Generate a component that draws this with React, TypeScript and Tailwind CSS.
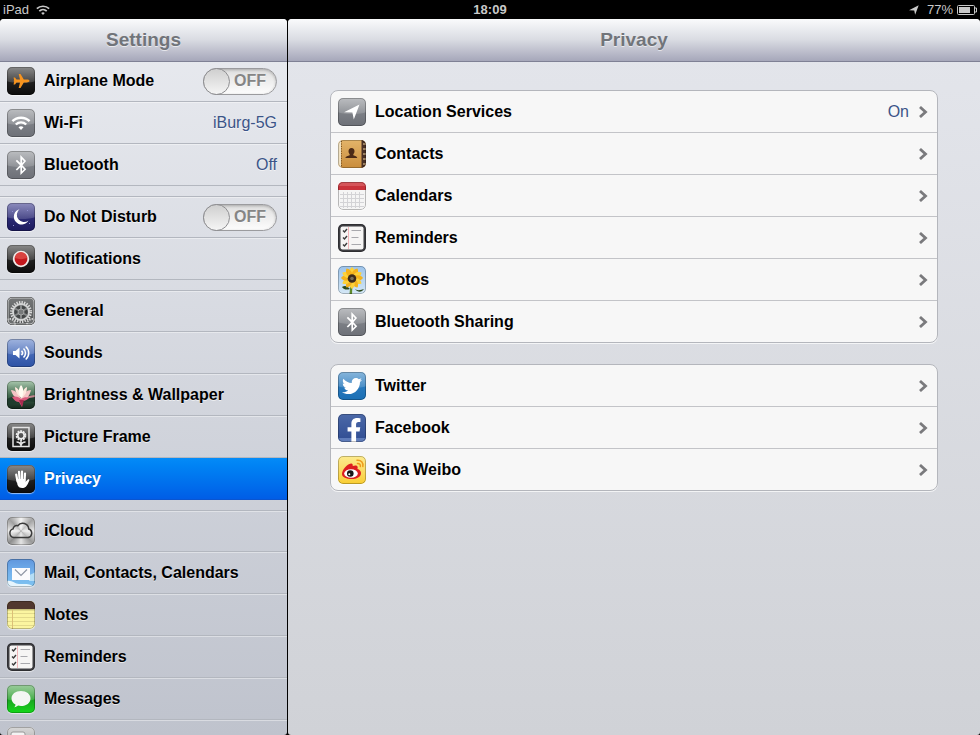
import type { ReactNode } from 'react';
import clsx from 'clsx';
import { FaBluetoothB, FaFacebookF, FaTwitter } from 'react-icons/fa';

type Row = {
  label: string;
  icon: ReactNode;
  value?: string;
  toggle?: boolean;
  active?: boolean;
};

const Tile = ({ className, children, gloss }: { className: string; children?: ReactNode; gloss?: boolean }) => (
  <span className={clsx('relative flex size-7 shrink-0 items-center justify-center overflow-hidden rounded-[5px] shadow-[0_1px_1px_rgba(255,255,255,0.6)]', className)}>
    {gloss && <span className="absolute -inset-x-2 top-0 h-4 rounded-b-[50%] bg-gradient-to-b from-white/40 to-white/15" />}
    <span className="relative flex items-center justify-center">{children}</span>
    <span className="absolute inset-0 rounded-[5px] border border-black/25" />
  </span>
);

const Art = ({ children }: { children: ReactNode }) => (
  <svg viewBox="0 0 28 28" className="size-7" fill="none" aria-hidden="true">
    {children}
  </svg>
);

const GREY = 'bg-gradient-to-b from-[#8e9196] to-[#6d7077] text-white';
const BLACK = 'bg-gradient-to-b from-[#3a3a3a] to-[#0c0c0c] text-white';

const WifiGlyph = ({ className }: { className?: string }) => (
  <svg viewBox="0 0 20 14" className={className} fill="none" stroke="currentColor" strokeWidth="2.4" aria-hidden="true">
    <path d="M1.400 5.200C6 .6 14 .6 18.600 5.200" />
    <path d="M4.800 8.500c2.900-2.800 7.500-2.800 10.400 0" />
    <path d="M7.500 11.200c1.500-1.300 3.500-1.300 5 0L10 14z" fill="currentColor" stroke="none" />
  </svg>
);

const ArrowGlyph = ({ className }: { className?: string }) => (
  <svg viewBox="0 0 16 16" className={className} fill="currentColor" aria-hidden="true">
    <path d="M15.500.5L9.800 15.500 8.400 8.600 0 8.200z" />
  </svg>
);

const AirplaneIcon = () => (
  <Tile className={BLACK} gloss>
    <Art>
      <path
        d="M22.500 14c0 .9-1.400 1.400-3 1.400h-2.700L13.500 21h-1.800l1.300-5.600H9.500L8 17.500H6.500l.7-2.700-.7-.8.700-.8-.7-2.700H8l1.500 2.100H13L11.700 7h1.800l3.300 5.600h2.700c1.600 0 3 .5 3 1.400z"
        fill="#f7941f"
      />
    </Art>
  </Tile>
);

const HandIcon = () => (
  <Tile className={BLACK} gloss>
    <Art>
      <path d="M9.200 9.500l1.300 7M12 6.800l.6 8M15 6.600v8M18 8.500l-.5 8" stroke="#fff" strokeWidth="2.200" strokeLinecap="round" />
      <path d="M9.500 14h9l-.2 3 2.300-2.300c.8-.7 2-.2 1.700.8-1 2.500-2.500 6.500-5.200 7.300-3 .8-6-.3-6.700-3.300z" fill="#fff" />
    </Art>
  </Tile>
);

const BluetoothIcon = () => (
  <Tile className={GREY} gloss>
    <FaBluetoothB className="size-5" />
  </Tile>
);

const RemindersIcon = () => (
  <Tile className="bg-[#3e3e42]">
    <Art>
      <rect x="2.500" y="2.500" width="23" height="23" rx="2" fill="#f6f5f4" />
      <path d="M10.500 3v22" stroke="#f0b5b8" />
      {[6.5, 13.5, 20.5].map((y, i) => (
        <g key={y}>
          <path d={`M5 ${y}l1.500 1.500 2.500-3`} stroke="#3c3c3c" strokeWidth="1.400" />
          <path d={`M13.500 ${y}h${i === 1 ? 7 : 9.5}`} stroke="#a9a9ad" strokeWidth="1.200" />
        </g>
      ))}
    </Art>
  </Tile>
);

const GearIcon = () => (
  <Tile className="bg-gradient-to-b from-[#77797a] to-[#505253]">
    <Art>
      <circle cx="14" cy="15" r="9.500" stroke="#dcdcdc" strokeWidth="3" strokeDasharray="1.300 1.200" />
      <circle cx="14" cy="15" r="8" stroke="#d2d3d3" strokeWidth="1.800" />
      <circle cx="14" cy="15" r="6.500" fill="#444647" />
      <path d="M14 8v14M8 11.500l12 7M20 11.500l-12 7" stroke="#858788" strokeWidth="2" />
      <circle cx="14" cy="15" r="3" fill="#77797a" stroke="#a5a6a6" />
      <circle cx="3" cy="27" r="5" stroke="#d0d0d0" strokeWidth="2" strokeDasharray="1.500 1" fill="#6d6f70" />
      <circle cx="25" cy="27" r="5" stroke="#d0d0d0" strokeWidth="2" strokeDasharray="1.500 1" fill="#6d6f70" />
      <rect x="1" y="1" width="26" height="26" rx="4" stroke="#c4c5c6" />
    </Art>
  </Tile>
);

const LotusIcon = () => (
  <Tile className="bg-gradient-to-b from-[#a9c8ae] via-[#456c51] to-[#14271d]">
    <Art>
      <path d="M0 18c6-4 22-5 28-2v5c-9-2-19 2-28 3z" fill="#203c2d" />
      <path d="M16 16l12-2v2l-11 2z" fill="#c4848e" />
      <path d="M4 9c5 0 7 4 10 8 2-5 6-8 10-8-1 5-4 9-9 11C9 18 5 14 4 9z" fill="#f3c3c4" />
      <path d="M8 6c4 2 6 6 6.500 11C10 14 8 10 8 6zM20 6c-4 2-5 6-5.500 11C19 14 20 10 20 6z" fill="#fde7dc" />
      <path d="M14 4c3 3 3 9 .5 13C11 13 11 8 14 4z" fill="#fffaf0" />
      <path d="M5 16c4-1 7 0 9 2 3-2 6-2 8-1-2 2-4 3-6 3l-1 6-3-5c-3 0-5-2-7-5z" fill="#d95b7c" />
      <path d="M12 19l3 7 2-7z" fill="#a92c50" />
    </Art>
  </Tile>
);

const PictureFrameIcon = () => (
  <Tile className={BLACK} gloss>
    <Art>
      <rect x="6" y="4.500" width="16" height="19" stroke="#e4e4e4" strokeWidth="1.500" />
      <circle cx="14" cy="12.500" r="4.300" stroke="#ececec" strokeWidth="2" strokeDasharray="1.900 .8" />
      <circle cx="14" cy="12.500" r="3.200" stroke="#ececec" strokeWidth="1.600" />
      <path d="M14 17v6M9.500 19c2 0 4 1 4.500 3.500.5-2.500 2.500-3.500 4.500-3.500" stroke="#e4e4e4" strokeWidth="1.500" />
    </Art>
  </Tile>
);

const SpeakerIcon = () => (
  <Tile className="bg-gradient-to-b from-[#5e80c8] to-[#2d52a5] text-white" gloss>
    <Art>
      <path d="M6 12h2.500l4-3.500v11l-4-3.500H6z" fill="#fff" />
      <path d="M14.500 11.800c1.300 1.300 1.300 3.100 0 4.400M16.500 9.500c2.700 2.600 2.700 6.400 0 9M18.700 7.500c4 3.600 4 9.400 0 13" stroke="#fff" strokeWidth="1.500" />
    </Art>
  </Tile>
);

const CloudIcon = () => (
  <Tile className="bg-[conic-gradient(#f5f5f5,#a5a5a5,#e9e9e9,#999,#e4e4e4,#8f8f8f,#ededed,#a0a0a0,#f5f5f5)]">
    <Art>
      <path
        d="M6.800 20.500a4.400 4.400 0 0 1-.7-8.600 3.600 3.600 0 0 1 4.700-3.100 6 6 0 0 1 10.900 3.200 4.400 4.400 0 0 1-.6 8.500z"
        fill="#fff"
        fillOpacity=".35"
        stroke="#3b3b3b"
        strokeWidth="1.500"
      />
    </Art>
  </Tile>
);

const MailIcon = () => (
  <Tile className="bg-gradient-to-b from-[#6096dd] via-[#73b2ed] to-[#7fc3f0]">
    <Art>
      <path d="M0 28v-6c5-1 8 3 12 3 5 0 10-1 16 3z" fill="#e6f5fd" />
      <path d="M22 17c2-3 5-2 6-4v9h-6z" fill="#b5def6" />
      <rect x="5" y="9" width="18" height="12" fill="#fbfbfd" />
      <path d="M8 10.500l6 6 6-6" stroke="#8f97a5" strokeWidth="1.200" />
    </Art>
  </Tile>
);

const NotesIcon = () => (
  <Tile className="bg-[#fbf5a0]">
    <Art>
      <path d="M0 0h28v8H0z" fill="#51382f" />
      <path d="M0 8h28v1.500H0z" fill="#c9c27a" />
      <path d="M0 12.500h28M0 16.500h28M0 20.500h28M0 24.500h28" stroke="#e3da8c" />
      <path d="M5.500 9v19" stroke="#dcc077" />
    </Art>
  </Tile>
);

const MessagesIcon = () => (
  <Tile className="bg-gradient-to-b from-[#55a957] via-[#1ba021] to-[#12d918]" gloss>
    <Art>
      <path
        d="M14 6c5.500 0 9.500 3.200 9.500 7.400S19.500 21 14 21c-1 0-2-.1-2.900-.4-.9.900-2.200 1.500-3.800 1.600.8-.8 1.200-1.700 1.200-2.800-2.500-1.300-4-3.400-4-6C4.500 9.200 8.500 6 14 6z"
        fill="#f4f6f4"
      />
    </Art>
  </Tile>
);

const FaceTimeIcon = () => (
  <Tile className="bg-gradient-to-b from-[#d8d8d8] to-[#9a9a9a]">
    <Art>
      <rect x="4" y="5" width="14" height="17" rx="2" fill="#f3f3f3" stroke="#989898" />
      <path d="M18 13l6-5v12l-6-5z" fill="#f3f3f3" stroke="#989898" />
    </Art>
  </Tile>
);

const MoonIcon = () => (
  <Tile className="bg-gradient-to-b from-[#3f3e90] to-[#1c1a5e]" gloss>
    <Art>
      <path d="M12.500 6.200a7.800 7.800 0 1 0 9 11.200 7 7 0 0 1-9-11.200z" fill="#fff" />
      <path d="M20 7h1v1h-1zM6 22h1v1H6zM22 20h1v1h-1zM5 8h1v1H5z" fill="#8f8fd0" />
    </Art>
  </Tile>
);

const NotificationsIcon = () => (
  <Tile className={BLACK} gloss>
    <Art>
      <circle cx="14" cy="14" r="7.300" fill="#c3181d" stroke="#f1e9e6" strokeWidth="1.800" />
      <path d="M8 13a6 6 0 0 1 12 0c-4 1.500-8 1.500-12 0z" fill="#d94340" />
    </Art>
  </Tile>
);

const ContactsIcon = () => (
  <Tile className="bg-gradient-to-b from-[#e3b469] to-[#c98d3c]">
    <Art>
      <path d="M0 0h3v28H0z" fill="#f1e2c2" />
      <path d="M3.500 1v26" stroke="#7c5423" strokeDasharray="1.200 1.200" />
      <path d="M23.500 0H28v28h-4.500z" fill="#4a3126" />
      <path d="M25 4h3M25 9h3M25 14h3M25 19h3M25 24h3" stroke="#b99d77" strokeWidth="1.500" />
      <path
        d="M13.500 8c2 0 3 1.400 3 3.300 0 1.200-.5 2.200-1.200 2.900v1c1.800.6 3.700 1 4 2.800h-12c.3-1.800 2.600-2.200 4.400-2.800v-1c-.7-.7-1.200-1.700-1.200-2.900C10.500 9.400 11.500 8 13.500 8z"
        fill="#4b2a17"
      />
    </Art>
  </Tile>
);

const CalendarIcon = () => (
  <Tile className="bg-[#f5f5f5]">
    <Art>
      <path d="M0 0h28v8H0z" fill="#c9333b" />
      <path d="M0 0h28v4H0z" fill="#d5555a" />
      <path d="M2 12.500h24M2 16.500h24M2 20.500h24M2 24.500h24M5.500 10v16M9.500 10v16M13.500 10v16M17.500 10v16M21.500 10v16" stroke="#d3d3d6" />
    </Art>
  </Tile>
);

const SunflowerIcon = () => (
  <Tile className="bg-gradient-to-b from-[#9cc3ea] to-[#d5e8f6]">
    <Art>
      <path d="M12.500 18l-1 10H14l.5-10z" fill="#5d8a2a" />
      <path d="M4 21c3-2 5-1 8 2-3 1-6 1-8-2zM17 23c3 2 6 1 9 0-2 3-6 4-9 0z" fill="#2c4a1c" />
      {[0, 30, 60, 90, 120, 150, 180, 210, 240, 270, 300, 330].map((angle) => (
        <path
          key={angle}
          d="M14 12C10 8 11 3 14 1c3 2 4 7 0 11z"
          fill={angle % 60 ? '#f4b21c' : '#fdd23a'}
          transform={`rotate(${angle} 14 12)`}
        />
      ))}
      <circle cx="14" cy="12.500" r="4.300" fill="#3b2a1a" />
      <circle cx="14" cy="12.500" r="1.800" fill="#77705a" />
    </Art>
  </Tile>
);

const WeiboIcon = () => (
  <Tile className="bg-gradient-to-b from-[#fdeb8d] to-[#f9cd2d]">
    <Art>
      <path
        d="M4 18c0-4 5-10 9-10.500 1.500-.2 2 1.300 1.700 2.500 2.300-.9 5-.9 5 1.500 0 .6-.2 1-.3 1.500 2 .5 3.600 2.200 3.600 4 0 4-4.500 6-9.500 6S4 21.500 4 18z"
        fill="#dd1f20"
      />
      <ellipse cx="13" cy="17.500" rx="6.800" ry="4.300" fill="#fff" />
      <circle cx="12.300" cy="17.500" r="3.300" fill="#161616" />
      <circle cx="11.300" cy="18.300" r="1" fill="#fff" />
      <path d="M19.500 7.500c2-.2 3.200 1.200 2.800 3M19 4.200c4-.4 6.600 2.600 5.800 6.300" stroke="#ee9a1b" strokeWidth="1.500" strokeLinecap="round" />
    </Art>
  </Tile>
);

const FacebookIcon = () => (
  <Tile className="bg-gradient-to-b from-[#4c69a8] to-[#2f4c92]">
    <span className="flex size-7 items-end justify-end border-b-4 border-[#5f7cba] pr-1">
      <FaFacebookF className="-mb-1 h-6 w-4 text-white" />
    </span>
  </Tile>
);

const sidebar: Row[][] = [
  [
    { label: 'Airplane Mode', toggle: true, icon: <AirplaneIcon /> },
    { label: 'Wi-Fi', value: 'iBurg-5G', icon: <Tile className={GREY} gloss><WifiGlyph className="h-3.5 w-5" /></Tile> },
    { label: 'Bluetooth', value: 'Off', icon: <BluetoothIcon /> },
  ],
  [
    { label: 'Do Not Disturb', toggle: true, icon: <MoonIcon /> },
    { label: 'Notifications', icon: <NotificationsIcon /> },
  ],
  [
    { label: 'General', icon: <GearIcon /> },
    { label: 'Sounds', icon: <SpeakerIcon /> },
    { label: 'Brightness & Wallpaper', icon: <LotusIcon /> },
    { label: 'Picture Frame', icon: <PictureFrameIcon /> },
    { label: 'Privacy', active: true, icon: <HandIcon /> },
  ],
  [
    { label: 'iCloud', icon: <CloudIcon /> },
    { label: 'Mail, Contacts, Calendars', icon: <MailIcon /> },
    { label: 'Notes', icon: <NotesIcon /> },
    { label: 'Reminders', icon: <RemindersIcon /> },
    { label: 'Messages', icon: <MessagesIcon /> },
    { label: '', icon: <FaceTimeIcon /> },
  ],
];

const privacy: Row[][] = [
  [
    { label: 'Location Services', value: 'On', icon: <Tile className={GREY} gloss><ArrowGlyph className="size-4" /></Tile> },
    { label: 'Contacts', icon: <ContactsIcon /> },
    { label: 'Calendars', icon: <CalendarIcon /> },
    { label: 'Reminders', icon: <RemindersIcon /> },
    { label: 'Photos', icon: <SunflowerIcon /> },
    { label: 'Bluetooth Sharing', icon: <BluetoothIcon /> },
  ],
  [
    { label: 'Twitter', icon: <Tile className="bg-gradient-to-b from-[#3684c4] to-[#1a6fb5] text-white" gloss><FaTwitter className="size-5" /></Tile> },
    { label: 'Facebook', icon: <FacebookIcon /> },
    { label: 'Sina Weibo', icon: <WeiboIcon /> },
  ],
];

const Toggle = () => (
  <span className="relative flex h-[27px] w-[74px] items-center justify-end rounded-full border border-[#9b9b9e] bg-gradient-to-b from-[#dfdfdf] to-[#fdfdfd] pr-2.5 font-bold text-[#858585] shadow-[inset_0_1px_3px_rgba(0,0,0,0.25)]">
    <input type="checkbox" role="switch" className="absolute inset-0 cursor-pointer appearance-none rounded-full" />
    <span className="pointer-events-none absolute -left-px -top-px size-[27px] rounded-full border border-[#8e8e91] bg-gradient-to-b from-[#cfcfcf] to-[#f5f5f5]" />
    OFF
  </span>
);

const Header = ({ title }: { title: string }) => (
  <header className="relative z-10 flex h-[43px] shrink-0 items-center justify-center border-b border-[#7f8195] bg-gradient-to-b from-[#fafbfc] via-[#d9dbe2] to-[#a6a7ba]">
    <h1 className="text-[19px] font-bold text-[#71747a] [text-shadow:0_1px_0_rgba(255,255,255,0.6)]">{title}</h1>
  </header>
);

const SidebarRow = ({ row }: { row: Row }) => {
  const className = clsx(
    'flex h-[42px] items-center gap-[9px] border-b pl-[7px] pr-2.5 first:border-t',
    row.active
      ? 'border-[#0a55d0] bg-gradient-to-b from-[#048bf7] to-[#015de6] text-white [text-shadow:0_-1px_0_rgba(0,0,0,0.3)]'
      : 'border-[#b3b7bf] shadow-[inset_0_1px_0_rgba(255,255,255,0.4)] [text-shadow:0_1px_0_rgba(255,255,255,0.6)]',
  );
  const content = (
    <>
      {row.icon}
      <span className="grow font-bold">{row.label}</span>
      {row.value && <span className="text-[#3b5488]">{row.value}</span>}
      {row.toggle && <Toggle />}
    </>
  );
  return row.toggle ? (
    <label className={className}>{content}</label>
  ) : (
    <a href="#" className={className} aria-current={row.active ? 'page' : undefined}>
      {content}
    </a>
  );
};

const Chevron = () => (
  <svg viewBox="0 0 10 12" className="h-3 w-2.5" fill="none" stroke="#7a7a7d" strokeWidth="2.800" aria-hidden="true">
    <path d="M2 1l5.500 5L2 11" />
  </svg>
);

const StatusBar = () => (
  <div className="grid h-[19px] shrink-0 grid-cols-3 items-center px-[3px] text-[13px] text-[#c9c9c9]">
    <div className="flex items-center gap-1.5">
      iPad
      <WifiGlyph className="h-2.5 w-4" />
    </div>
    <div className="text-center font-bold">18:09</div>
    <div className="flex items-center justify-end gap-1">
      <ArrowGlyph className="mr-1 size-2.5" />
      77%
      <svg viewBox="0 0 20 10" className="h-2.5 w-5" fill="none" aria-hidden="true">
        <rect x=".5" y=".5" width="17" height="9" rx="1" stroke="#c9c9c9" />
        <rect x="2" y="2" width="11" height="6" fill="#c9c9c9" />
        <path d="M18 3h1.500v4H18" stroke="#c9c9c9" />
      </svg>
    </div>
  </div>
);

const App = () => {
  return (
    <div className="flex h-screen flex-col overflow-hidden bg-black font-['Liberation_Sans',Arial,sans-serif] text-base leading-5 text-black">
      <StatusBar />
      <div className="flex min-h-0 grow gap-px">
        <aside className="flex w-[287px] shrink-0 flex-col overflow-hidden rounded-t-[4px] rounded-b-[3px] bg-gradient-to-b from-[#e9ebf0] to-[#bfc3cd]">
          <Header title="Settings" />
          <nav className="-mt-0.5 flex flex-col gap-2.5">
            {sidebar.map((group, i) => (
              <div key={i}>
                {group.map((row) => (
                  <SidebarRow key={row.label} row={row} />
                ))}
              </div>
            ))}
          </nav>
        </aside>

        <main className="flex grow flex-col overflow-hidden rounded-t-[4px] rounded-b-[3px] bg-gradient-to-b from-[#e4e6ec] to-[#d0d2d7]">
          <Header title="Privacy" />
          <div className="flex flex-col gap-[21px] px-[42px] pt-7">
            {privacy.map((group, i) => (
              <section key={i} className="rounded-lg border border-[#b4b6bc] bg-[#f7f7f7] shadow-[0_1px_0_rgba(255,255,255,0.7)]">
                {group.map((row) => (
                  <a key={row.label} href="#" className="flex h-[42px] items-center gap-[9px] border-b border-[#c3c4c8] pl-[7px] pr-[9px] last:h-[41px] last:border-b-0">
                    {row.icon}
                    <span className="grow font-bold">{row.label}</span>
                    {row.value && <span className="text-[#3b5488]">{row.value}</span>}
                    <Chevron />
                  </a>
                ))}
              </section>
            ))}
          </div>
        </main>
      </div>
    </div>
  );
};

export default App;
